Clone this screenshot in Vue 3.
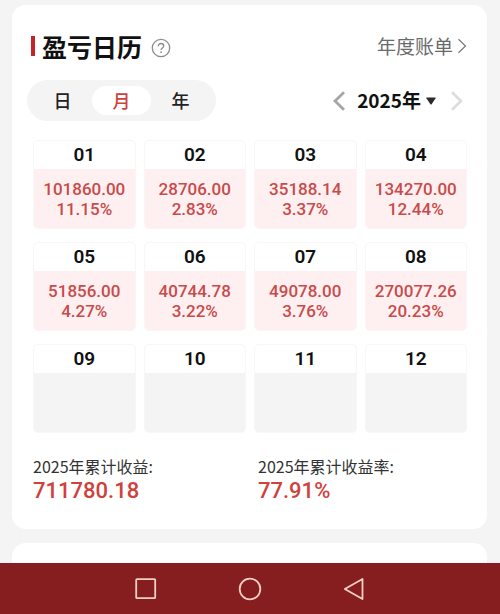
<script setup>
import { ref } from 'vue'

const tabs = ['日', '月', '年']
const activeTab = ref('月')

const months = [
  { month: '01', profit: '101860.00', rate: '11.15%' },
  { month: '02', profit: '28706.00', rate: '2.83%' },
  { month: '03', profit: '35188.14', rate: '3.37%' },
  { month: '04', profit: '134270.00', rate: '12.44%' },
  { month: '05', profit: '51856.00', rate: '4.27%' },
  { month: '06', profit: '40744.78', rate: '3.22%' },
  { month: '07', profit: '49078.00', rate: '3.76%' },
  { month: '08', profit: '270077.26', rate: '20.23%' },
  { month: '09' },
  { month: '10' },
  { month: '11' },
  { month: '12' }
]

const totals = [
  { label: '2025年累计收益:', value: '711780.18' },
  { label: '2025年累计收益率:', value: '77.91%' }
]
</script>

<template>
  <div class="page">
    <main class="content">
      <section class="card">
        <header class="card-header">
          <h1>盈亏日历</h1>
          <button class="help" aria-label="说明">
            <svg width="20" height="20" viewBox="0 0 20 20" fill="none" stroke="#8c8c8c">
              <circle cx="10" cy="10" r="8.7" stroke-width="1.3" />
              <path d="M7.3 8.2C7.3 6.4 8.5 5.5 10 5.5s2.7.9 2.7 2.5c0 1.9-2.6 2-2.6 4.1" stroke-width="1.4" />
              <circle cx="10.1" cy="14.2" r="0.9" fill="#8c8c8c" stroke="none" />
            </svg>
          </button>
          <a class="bill-link" href="#">
            年度账单
            <svg width="10" height="16" viewBox="0 0 10 16" fill="none" stroke="#7a7a7a" stroke-width="1.2">
              <path d="M1.5 1.2 8.5 8l-7 6.8" />
            </svg>
          </a>
        </header>

        <div class="toolbar">
          <div class="tabs">
            <button
              v-for="tab in tabs"
              :key="tab"
              class="tab"
              :class="{ active: tab === activeTab }"
              @click="activeTab = tab"
            >{{ tab }}</button>
          </div>
          <div class="year-picker">
            <button class="arrow" aria-label="上一年">
              <svg width="14" height="20" viewBox="0 0 14 20" fill="none" stroke="#a6a6a6" stroke-width="2.8">
                <path d="M12 1.2 3 10l9 8.8" />
              </svg>
            </button>
            <button class="year">
              2025年
              <svg width="10" height="10" viewBox="0 0 10 10" fill="#2b2b2b">
                <path d="M.8 2.5h8.4q.8 0 .4.8L5.6 9.2q-.6.7-1.2 0L.4 3.3Q0 2.5.8 2.5z" />
              </svg>
            </button>
            <button class="arrow next" aria-label="下一年">
              <svg width="14" height="20" viewBox="0 0 14 20" fill="none" stroke="#dcdcdc" stroke-width="2.6">
                <path d="m2 1.2 9 8.8-9 8.8" />
              </svg>
            </button>
          </div>
        </div>

        <div class="months">
          <div v-for="item in months" :key="item.month" class="month">
            <div class="month-name">{{ item.month }}</div>
            <div class="month-body" :class="{ profit: item.profit }">
              <span>{{ item.profit }}</span>
              <span>{{ item.rate }}</span>
            </div>
          </div>
        </div>

        <dl class="totals">
          <div v-for="total in totals" :key="total.label">
            <dt>{{ total.label }}</dt>
            <dd>{{ total.value }}</dd>
          </div>
        </dl>
      </section>

      <section class="card next-card"></section>
    </main>

    <nav class="nav-bar">
      <button aria-label="最近任务">
        <svg width="24" height="24" viewBox="0 0 24 24" fill="none" stroke="#f6cfc6" stroke-width="1.8">
          <rect x="2.2" y="2.2" width="19" height="19" rx="0.8" />
        </svg>
      </button>
      <button aria-label="主页">
        <svg width="24" height="24" viewBox="0 0 24 24" fill="none" stroke="#f6cfc6" stroke-width="1.8">
          <circle cx="12" cy="12" r="10.3" />
        </svg>
      </button>
      <button aria-label="返回">
        <svg width="24" height="24" viewBox="0 0 24 24" fill="none" stroke="#f6cfc6" stroke-width="1.8" stroke-linejoin="round">
          <path d="M20.5 2v20L2.8 12z" />
        </svg>
      </button>
    </nav>
  </div>
</template>

<style>
body {
  margin: 0;
  background: #f4f4f4;
}
</style>

<style scoped>
.page {
  display: flex;
  flex-direction: column;
  min-height: 100vh;
  background: #f4f4f4;
  color: #111111;
  font-family: "Noto Sans CJK SC", sans-serif;
}

button {
  display: flex;
  align-items: center;
  justify-content: center;
  padding: 0;
  border: none;
  background: none;
  color: inherit;
  font: inherit;
  cursor: pointer;
}

.content {
  flex: 1;
  display: flex;
  flex-direction: column;
  gap: 14px;
  padding: 5px 13px 0 12px;
}

.card {
  padding: 23px 20px 25px 21px;
  border-radius: 14px;
  background: #ffffff;
}

.next-card {
  flex: 1;
  padding: 0;
  border-radius: 14px 14px 0 0;
}

.card-header {
  display: flex;
  align-items: center;
  height: 36px;
}

h1 {
  display: flex;
  align-items: center;
  gap: 7px;
  margin: 0 0 0 -2px;
  font-size: 25px;
  line-height: 36px;
  font-weight: 700;
}

h1::before {
  content: '';
  width: 4px;
  height: 20px;
  background: #c62328;
}

.help {
  margin: 4px 0 0 9px;
}

.bill-link {
  display: flex;
  align-items: center;
  gap: 4px;
  margin-left: auto;
  color: #6a6a6a;
  font-size: 19px;
  line-height: 36px;
  font-weight: 400;
  text-decoration: none;
}

.toolbar {
  display: flex;
  align-items: center;
  justify-content: space-between;
  margin: 16px 0 19px -6px;
}

.tabs {
  display: flex;
  padding: 6px;
  border-radius: 21px;
  background: #f4f4f4;
}

.tab {
  width: 59px;
  height: 29px;
  padding-bottom: 2px;
  border-radius: 15px;
  color: #222222;
  font-size: 18px;
  font-weight: 500;
}

.tab.active {
  background: #ffffff;
  color: #d0403c;
}

.year-picker {
  display: flex;
  align-items: center;
  gap: 11px;
  margin-right: 3px;
}

.year {
  gap: 5px;
  padding-bottom: 2px;
  font-size: 19px;
  line-height: 28px;
  font-weight: 700;
}

.next {
  margin-left: 3px;
}

.months {
  display: grid;
  grid-template-columns: repeat(4, 1fr);
  gap: 13px 8px;
}

.month {
  overflow: hidden;
  border: 1px solid #f7f7f7;
  border-radius: 5px;
}

.month-name {
  font-family: Roboto, "Noto Sans CJK SC", sans-serif;
  font-size: 19px;
  line-height: 28px;
  font-weight: 600;
  text-align: center;
}

.month-body {
  display: flex;
  flex-direction: column;
  align-items: center;
  justify-content: center;
  height: 59px;
  background: #f4f4f4;
  color: #c94a4a;
  font-family: Roboto, "Noto Sans CJK SC", sans-serif;
  font-size: 17px;
  line-height: 20px;
  font-weight: 500;
}

.month-body.profit {
  background: #fef0f1;
}

.totals {
  display: grid;
  grid-template-columns: 1fr 1fr;
  gap: 16px;
  margin: 22px 0 0;
}

dt {
  color: #333333;
  font-size: 16px;
  line-height: 23px;
}

dd {
  margin: 0;
  color: #d0403c;
  font-family: Roboto, "Noto Sans CJK SC", sans-serif;
  font-size: 22px;
  line-height: 26px;
  font-weight: 500;
}

.nav-bar {
  display: flex;
  align-items: center;
  justify-content: center;
  gap: 80px;
  height: 51px;
  background: #861d1e;
}
</style>
